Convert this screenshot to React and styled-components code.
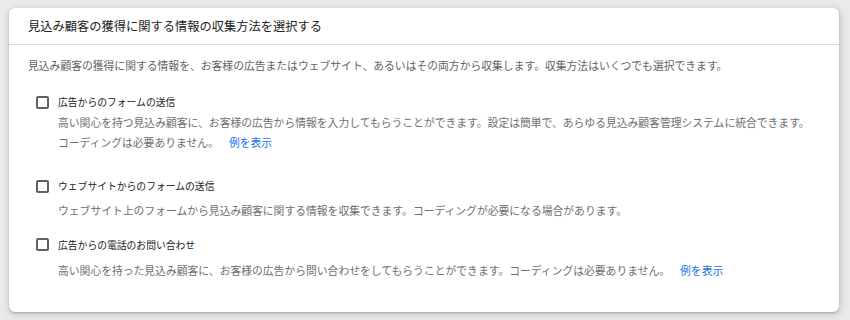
import React from 'react';
import styled, { createGlobalStyle } from 'styled-components';

const GlobalStyle = createGlobalStyle`
  html, body {
    margin: 0;
    padding: 0;
    background: #e9eaec;
  }
  body {
    font-family: "Noto Sans CJK JP", "Noto Sans", sans-serif;
  }
`;

const Page = styled.div`
  padding: 8px 11px 8px 9px;
  height: 320px;
  box-sizing: border-box;
`;

const Card = styled.div`
  background: #fff;
  border-radius: 6px;
  box-shadow: 0 1px 2px rgba(60, 64, 67, 0.3), 1px 2px 6px 2px rgba(60, 64, 67, 0.15);
  height: 304px;
  box-sizing: border-box;
`;

const Header = styled.div`
  height: 36px;
  padding: 0 19px;
  border-bottom: 1px solid #dadce0;
  display: flex;
  align-items: center;
`;

const Title = styled.div`
  font-size: 12.25px;
  color: #202124;
  line-height: 36px;
  white-space: nowrap;
`;

const Body = styled.div`
  padding: 10px 19px 0 19px;
`;

const Intro = styled.div`
  font-size: 10.8px;
  line-height: 20px;
  color: #5f6368;
  white-space: nowrap;
`;

const Option = styled.div`
  margin-top: ${(p) => p.$top}px;
  padding-left: 8px;
`;

const Row = styled.label`
  display: flex;
  align-items: center;
  gap: 9px;
  height: 20px;
`;

const Box = styled.span`
  width: 13px;
  height: 13px;
  box-sizing: border-box;
  border: 2px solid #5f6368;
  border-radius: 2px;
  flex-shrink: 0;
`;

const Label = styled.span`
  font-size: 9.8px;
  color: #202124;
  line-height: 20px;
  white-space: nowrap;
`;

const Desc = styled.div`
  margin-top: ${(p) => p.$top}px;
  padding-left: 22px;
  font-size: 10.8px;
  line-height: 20px;
  color: #6b6f74;
  white-space: nowrap;
`;

const Link = styled.a`
  color: #1a73e8;
  text-decoration: none;
  margin-left: 10px;
  cursor: pointer;
`;

const options = [
  {
    label: '広告からのフォームの送信',
    lines: [
      '高い関心を持つ見込み顧客に、お客様の広告から情報を入力してもらうことができます。設定は簡単で、あらゆる見込み顧客管理システムに統合できます。',
      'コーディングは必要ありません。',
    ],
    link: true,
    top: 17,
    descTop: 0,
  },
  {
    label: 'ウェブサイトからのフォームの送信',
    lines: ['ウェブサイト上のフォームから見込み顧客に関する情報を収集できます。コーディングが必要になる場合があります。'],
    link: false,
    top: 24,
    descTop: 4,
  },
  {
    label: '広告からの電話のお問い合わせ',
    lines: ['高い関心を持った見込み顧客に、お客様の広告から問い合わせをしてもらうことができます。コーディングは必要ありません。'],
    link: true,
    top: 14.5,
    descTop: 5.5,
  },
];

function App() {
  return (
    <Page>
      <GlobalStyle />
      <Card>
        <Header>
          <Title>見込み顧客の獲得に関する情報の収集方法を選択する</Title>
        </Header>
        <Body>
          <Intro>
            見込み顧客の獲得に関する情報を、お客様の広告またはウェブサイト、あるいはその両方から収集します。収集方法はいくつでも選択できます。
          </Intro>
          {options.map((opt, idx) => (
            <Option key={idx} $top={opt.top}>
              <Row>
                <Box />
                <Label>{opt.label}</Label>
              </Row>
              <Desc $top={opt.descTop}>
                {opt.lines.map((line, i) => (
                  <div key={i}>
                    {line}
                    {opt.link && i === opt.lines.length - 1 && <Link>例を表示</Link>}
                  </div>
                ))}
              </Desc>
            </Option>
          ))}
        </Body>
      </Card>
    </Page>
  );
}

export default App;
